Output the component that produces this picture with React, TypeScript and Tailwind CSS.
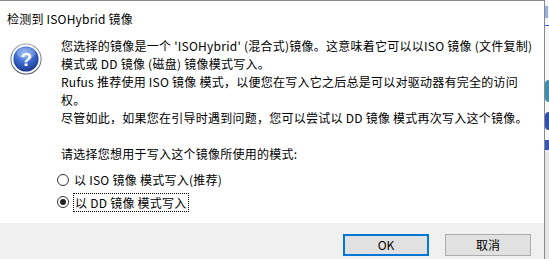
import React from "react";

const font = { fontFamily: '"Noto Sans CJK SC", "Noto Sans", sans-serif' };

function QuestionIcon() {
  return (
    <svg width="32" height="32" viewBox="0 0 32 32">
      <defs>
        <radialGradient id="qg" cx="45%" cy="30%" r="75%">
          <stop offset="0%" stopColor="#86b0f2" />
          <stop offset="50%" stopColor="#3a68cf" />
          <stop offset="100%" stopColor="#16307e" />
        </radialGradient>
        <linearGradient id="rg" x1="0" y1="0" x2="0" y2="1">
          <stop offset="0%" stopColor="#9aa3b0" />
          <stop offset="100%" stopColor="#4a5160" />
        </linearGradient>
      </defs>
      <circle cx="16" cy="16" r="15.6" fill="url(#rg)" />
      <circle cx="16" cy="16" r="14.6" fill="#ffffff" />
      <circle cx="16" cy="16" r="12.6" fill="url(#qg)" />
      <ellipse cx="16" cy="10" rx="9.5" ry="5.5" fill="#ffffff" opacity="0.22" />
      <text
        x="16.3"
        y="23.2"
        textAnchor="middle"
        fontSize="19"
        fontWeight="700"
        fill="#ffffff"
        style={{ fontFamily: '"Liberation Sans", Arial, sans-serif' }}
      >
        ?
      </text>
    </svg>
  );
}

export default function App() {
  return (
    <div className="flex w-[549px] h-[259px] overflow-hidden bg-white text-[12px] leading-[18px] text-black" style={font}>
      <div className="flex flex-col w-[545px] h-full border-t border-r border-[#8a8a8a] bg-white">
        <div className="h-[36px] pt-[9px] pl-[7px] whitespace-nowrap tracking-[0.2px]">检测到 ISOHybrid 镜像</div>
        <div className="flex flex-1 pl-[10px]">
          <div className="mt-[6px] w-[32px] h-[32px] shrink-0">
            <QuestionIcon />
          </div>
          <div className="ml-[19px] flex flex-col whitespace-nowrap tracking-[0.25px]">
            <div>您选择的镜像是一个 'ISOHybrid' (混合式)镜像。这意味着它可以以ISO 镜像 (文件复制)</div>
            <div>模式或 DD 镜像 (磁盘) 镜像模式写入。</div>
            <div>Rufus 推荐使用 ISO 镜像 模式，以便您在写入它之后总是可以对驱动器有完全的访问</div>
            <div>权。</div>
            <div>尽管如此，如果您在引导时遇到问题，您可以尝试以 DD 镜像 模式再次写入这个镜像。</div>
            <div className="h-[18px]" />
            <div>请选择您想用于写入这个镜像所使用的模式:</div>
            <div className="mt-[6px] flex flex-col -ml-[4px]">
              <div className="h-[22px] flex items-center">
                <span className="w-[12px] h-[12px] rounded-full border border-[#333333] bg-white shrink-0" />
                <span className="ml-[4px] px-[1px]">以 ISO 镜像 模式写入(推荐)</span>
              </div>
              <div className="h-[22px] flex items-center">
                <span className="w-[12px] h-[12px] rounded-full border border-[#333333] bg-white shrink-0 flex items-center justify-center">
                  <span className="w-[6px] h-[6px] rounded-full bg-[#222222]" />
                </span>
                <span className="ml-[4px] px-[1px] h-[19px] leading-[17px] border border-dotted border-black">以 DD 镜像 模式写入</span>
              </div>
            </div>
          </div>
        </div>
        <div className="h-[36px] bg-[#f0f0f0] flex justify-end items-start pt-[11px] pr-[13px] gap-[16px]">
          <button className="w-[86px] h-[22px] bg-[#e1e1e1] border-2 border-[#0078d7] flex items-center justify-center leading-none">
            OK
          </button>
          <button className="w-[86px] h-[22px] bg-[#e1e1e1] border border-[#adadad] flex items-center justify-center leading-none">
            取消
          </button>
        </div>
      </div>
      <div className="flex flex-col w-[4px] h-full bg-[#f7f7f7]">
        <div className="h-[6px]" />
        <div className="h-[12px] w-[3px] bg-[#5b7fd6] opacity-60" />
        <div className="h-[7px]" />
        <div className="h-[1px] bg-[#3a62c9]" />
        <div className="h-[54px]" />
        <div className="h-[22px] bg-[#3b8fb0] rounded-l-full" />
        <div className="h-[10px]" />
        <div className="h-[18px] bg-[#2d4fb8] rounded-l-full" />
        <div className="h-[10px]" />
        <div className="h-[10px] bg-[#3456c0]" />
        <div className="flex-1 bg-[#e6e6e6]" />
      </div>
    </div>
  );
}
